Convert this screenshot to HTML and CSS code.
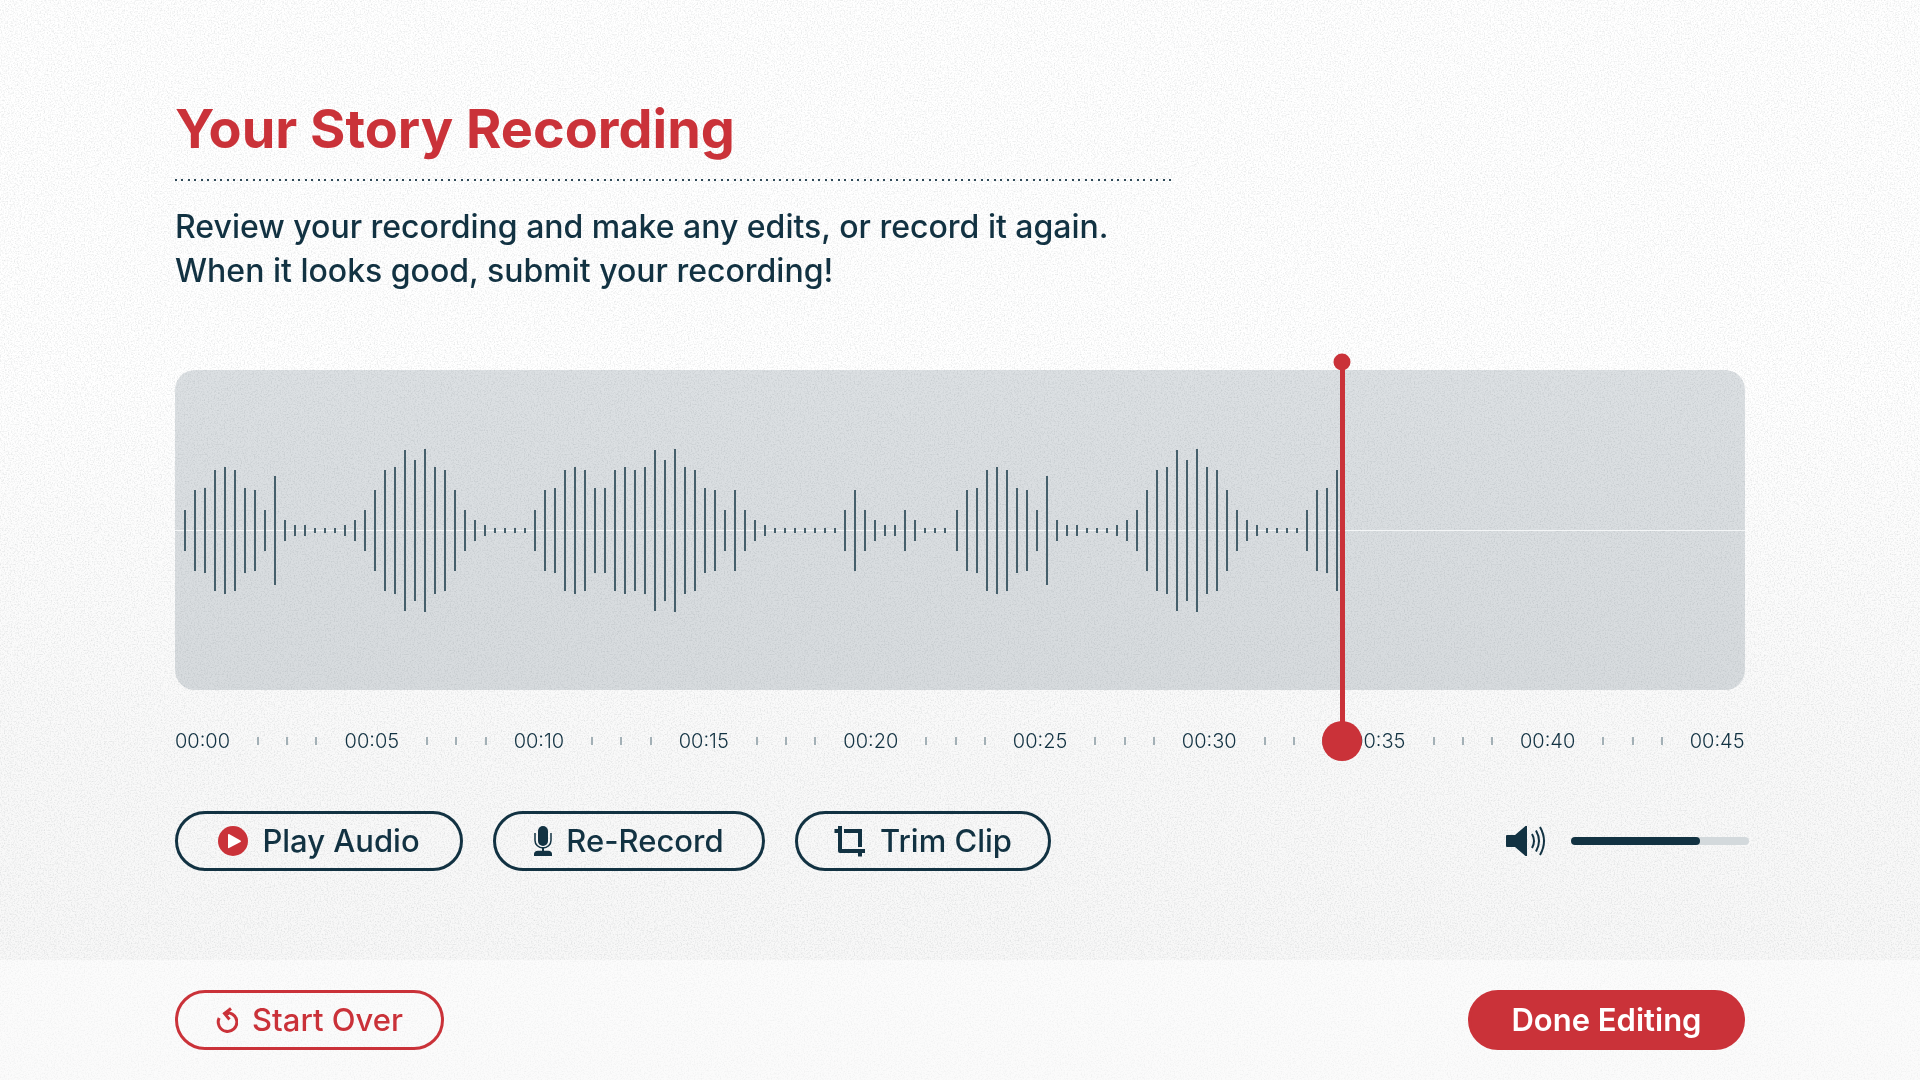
FILE: index.html
```html
<!DOCTYPE html>
<html lang="en">
<head>
<meta charset="utf-8">
<meta name="viewport" content="width=device-width, initial-scale=1">
<title>Your Story Recording</title>
<link rel="stylesheet" href="styles.css">
</head>
<body>
<svg class="grain" aria-hidden="true">
  <filter id="grain">
    <feTurbulence type="fractalNoise" baseFrequency="0.7" numOctaves="2" seed="4"/>
    <feColorMatrix values="0 0 0 0 0.4  0 0 0 0 0.43  0 0 0 0 0.44  0.7 0 0 0 -0.31"/>
  </filter>
  <rect width="100%" height="100%" filter="url(#grain)"/>
</svg>
<main class="editor">
  <header class="intro">
    <h1 class="title">Your Story Recording</h1>
    <p class="lead">Review your recording and make any edits, or record it again.<br>When it looks good, submit your recording!</p>
  </header>

  <section class="timeline" aria-label="Recording timeline">
    <div class="panel">
      <svg class="wave" viewBox="0 0 1570 320" role="img" aria-label="Waveform">
        <path class="axis" d="M0 160.5H1570"/>
        <path class="bars" id="bars"/>
      </svg>
    </div>
    <div class="ruler">
      <span>00:00</span><i></i><i></i><i></i>
      <span>00:05</span><i></i><i></i><i></i>
      <span>00:10</span><i></i><i></i><i></i>
      <span>00:15</span><i></i><i></i><i></i>
      <span>00:20</span><i></i><i></i><i></i>
      <span>00:25</span><i></i><i></i><i></i>
      <span>00:30</span><i></i><i></i><i></i>
      <span>00:35</span><i></i><i></i><i></i>
      <span>00:40</span><i></i><i></i><i></i>
      <span>00:45</span>
    </div>
    <div class="playhead"></div>
  </section>

  <div class="tools">
    <button class="btn play" type="button">
      <svg width="30" height="30" viewBox="0 0 30 30"><circle cx="15" cy="15" r="15" fill="#ca3239"/><path d="M10 9v12.500q0 1 1 .5L22.500 16q1-.8 0-1.600L11 8q-1-.3-1 1z" fill="#fff"/></svg>
      Play Audio
    </button>
    <button class="btn record" type="button">
      <svg width="18" height="30" viewBox="0 0 18 30" fill="currentColor"><rect x="4" y="0" width="10" height="20" rx="5"/><path d="M1 7v7.500a8 7.500 0 0 0 16 0V7" fill="none" stroke="currentColor" stroke-width="1.500"/><path d="M8 21h2v4H8z"/><path d="M0 30v-2q0-3 4-3.200h10q4 .2 4 3.200v2z"/></svg>
      Re-Record
    </button>
    <button class="btn trim" type="button">
      <svg width="32" height="32" viewBox="0 0 32 32" fill="none" stroke="currentColor" stroke-width="4"><path d="M6 1v25h25" stroke-linejoin="round"/><path d="M0.500 6H6M10 6h16v16M26 26v5.500"/></svg>
      Trim Clip
    </button>
    <label class="volume">
      <svg width="40" height="32" viewBox="0 0 40 32" fill="currentColor" aria-label="Volume"><path d="M1 10h8L19.500 1h1.500v30h-1.500L9 22H1q-1 0-1-1V11q0-1 1-1z"/><path d="M26 9q4 7 0 14M30 5.500q6 10.500 0 21M34 2q8 14 0 28" fill="none" stroke="currentColor" stroke-width="2"/></svg>
      <input type="range" min="0" max="100" value="71" aria-label="Volume">
    </label>
  </div>
</main>
<footer class="actions">
  <button class="btn restart" type="button">
    <svg width="22" height="26" viewBox="0 0 22 26" fill="none" stroke="currentColor" stroke-width="3"><path d="M3.200 11A9.300 9.300 0 1 0 8 6.500H13M15 1.500L8.500 6.500L13.500 12.500"/></svg>
    Start Over
  </button>
  <button class="btn done" type="button">Done Editing</button>
</footer>
<script src="wave.js"></script>
</body>
</html>
```
FILE: styles.css
```css
* { box-sizing: border-box; }

body {
  margin: 0;
  min-height: 100vh;
  display: flex;
  flex-direction: column;
  font-family: Inter, "Liberation Sans", sans-serif;
  color: #123242;
  background: linear-gradient(#ffffff 0%, #ffffff 35%, #f9f9f9 70%, #f7f7f7 100%);
}

.grain {
  position: fixed;
  inset: 0;
  width: 100%;
  height: 100%;
  z-index: -1;
}

.editor {
  flex: 1;
  padding: 101px 175px 88px;
}

.intro { width: 998px; max-width: 100%; }

.title {
  margin: 0;
  padding-bottom: 24px;
  font-size: 54px;
  line-height: 56px;
  font-weight: 700;
  color: #ca3239;
  background: repeating-linear-gradient(90deg, #2f4a58 0 2px, transparent 2px 6px, #2f4a58 6px 8px, transparent 8px 13px) left bottom / 100% 2px no-repeat;
}

.lead {
  margin: 24px 0 0;
  font-size: 32px;
  line-height: 44px;
  font-weight: 500;
}

.timeline {
  position: relative;
  margin-top: 77px;
}

.panel {
  overflow: hidden;
  border-radius: 20px;
  background: rgba(18, 50, 66, .15);
}

.wave { display: block; width: 100%; }
.axis { stroke: #f4f6f7; stroke-width: 1; }
.bars { stroke: #455f6b; stroke-width: 2; }

.ruler {
  display: flex;
  justify-content: space-between;
  align-items: center;
  margin-top: 38px;
  font-size: 20px;
  line-height: 26px;
  font-weight: 300;
}

.ruler i { width: 2px; height: 8px; background: #a3b0b6; }

.playhead {
  position: absolute;
  top: -8px;
  bottom: 13px;
  left: 74.2%;
  width: 5px;
  background: #ca3239;
}

.playhead::before,
.playhead::after {
  content: "";
  position: absolute;
  left: 50%;
  border-radius: 50%;
  background: #ca3239;
  transform: translate(-50%, -50%);
}

.playhead::before { top: 0; width: 17px; height: 17px; }
.playhead::after { top: 100%; width: 40px; height: 40px; }

.tools {
  display: flex;
  align-items: center;
  gap: 30px;
  margin-top: 57px;
}

.btn {
  display: flex;
  align-items: center;
  justify-content: center;
  gap: 14px;
  height: 60px;
  padding: 0;
  border: 3px solid currentColor;
  border-radius: 30px;
  background: transparent;
  color: #123242;
  font: 500 31px/36px Inter, "Liberation Sans", sans-serif;
  cursor: pointer;
}

.play { width: 288px; }
.record { width: 272px; }
.trim { width: 256px; }

.volume {
  display: flex;
  align-items: center;
  gap: 25px;
  margin: 0 -4px 0 auto;
}

.volume input {
  appearance: none;
  width: 178px;
  height: 8px;
  margin: 0;
  border-radius: 4px;
  background: linear-gradient(90deg, #123242 70%, #d3d9dc 70%);
}

.volume input::-webkit-slider-thumb {
  appearance: none;
  width: 8px;
  height: 8px;
  border-radius: 4px;
  background: #123242;
}

.actions {
  display: flex;
  justify-content: space-between;
  align-items: center;
  height: 120px;
  padding: 0 175px;
  background: rgba(255, 255, 255, .5);
}

.restart { width: 269px; color: #ca3239; }

.done {
  width: 277px;
  border-color: #ca3239;
  background: #ca3239;
  color: #fff;
  font-weight: 600;
}
```
FILE: wave.js
```js
// Bar heights, one sample every 10 units; the second take starts 2 units late.
const takes = [
  { start: 10, heights: [
    41, 81, 85, 121, 127, 121, 85, 81, 41, 109, 21, 11, 11, 5, 5, 5, 11, 21, 41, 81,
    121, 127, 161, 141, 163, 127, 121, 81, 41, 21, 11, 5, 5, 5, 5, 41, 81, 85, 121, 127,
    121, 85, 85, 121, 127, 121, 127, 161, 141, 163, 127, 121, 85, 81, 41, 81, 41, 21, 11,
    5, 5, 5, 5, 5, 5, 5, 41, 81, 41, 21, 11, 11, 41, 21, 5, 5, 5] },
  { start: 782, heights: [
    41, 81, 85, 121, 127, 121, 85, 81, 41, 109, 21, 11, 11, 5, 5, 5, 11, 21, 41, 81,
    121, 127, 161, 141, 163, 127, 121, 81, 41, 21, 11, 5, 5, 5, 5, 41, 81, 85, 121] }
];

document.getElementById('bars').setAttribute('d', takes.map(take =>
  take.heights.map((h, i) => `M${take.start + i * 10} ${160.5 - h / 2}v${h}`).join('')
).join(''));
```
